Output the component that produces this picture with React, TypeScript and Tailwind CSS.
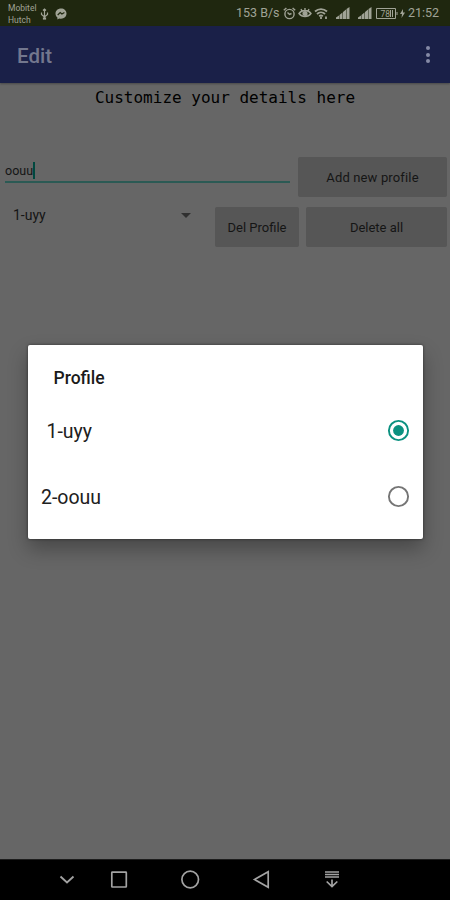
import { useState } from 'react'

const profiles = [
  { id: 1, label: '1-uyy', indent: 'pl-[18.5px]' },
  { id: 2, label: '2-oouu', indent: 'pl-[13px]' },
]

function StatusBar() {
  return (
    <div className="flex h-[26px] shrink-0 items-center bg-[#1f270f] text-[#a0a396]">
      <div className="w-[30px] ml-2 mt-px text-[8.5px] leading-[12px]">
        <div>Mobitel</div>
        <div>Hutch</div>
      </div>
      <svg className="ml-[2px] mt-[2px] h-3 w-[9px]" viewBox="0 0 9 12" fill="none" stroke="currentColor" strokeWidth="1.2">
        <path d="M4.5 1v10M1.500 4.500v2l3 2.500 3-2.500v-2M3 2.500 4.500 1 6 2.500" />
        <path d="M3.500 10h2v1h-2z" fill="currentColor" />
      </svg>
      <svg className="ml-[6px] mt-[2px] h-3 w-3" viewBox="0 0 12 12">
        <path d="M6 .5C2.800.5.5 2.700.5 5.600c0 1.600.7 3 1.900 4v2l1.800-1c.6.2 1.200.2 1.800.2 3.200 0 5.500-2.200 5.500-5.200S9.200.5 6 .5Z" fill="currentColor" />
        <path d="m2.700 7 2.500-2.500 1.700 1.500 2.500-1.500" fill="none" stroke="#1f270f" strokeWidth="1.200" />
      </svg>

      <div className="ml-auto mr-[10px] flex items-center">
        <span className="w-[44px] whitespace-nowrap text-[12.5px]">153 B/s</span>
        <svg className="ml-[3px] h-[13px] w-[13px]" viewBox="0 0 13 13" fill="none" stroke="currentColor" strokeWidth="1.400">
          <circle cx="6.500" cy="7" r="4.600" />
          <path d="M.8 3.300 3.400 1M12.200 3.300 9.600 1M4.500 5.500 6.500 7.500l2-1" />
        </svg>
        <svg className="ml-[2px] h-[13px] w-[14px]" viewBox="0 0 14 13" fill="none" stroke="currentColor" strokeWidth="1.400">
          <path d="M1 6.500c3-4 9-4 12 0-3 4-9 4-12 0ZM7 1v2.500M3 2l1 2M11 2l-1 2" />
          <circle cx="7" cy="6.500" r="1.900" fill="currentColor" />
        </svg>
        <svg className="ml-[2px] h-[13px] w-[15px]" viewBox="0 0 15 13" fill="none" stroke="currentColor" strokeWidth="1.800">
          <path d="M1 4.500c3.500-3.300 8.500-3.300 12 0M3 7c2.300-2.200 5.700-2.200 8 0M5.200 9.200c1.200-1 2.400-1 3.600 0" />
          <path d="M7 10v2M12 9.500v2.500" />
        </svg>
        <SignalIcon className="ml-[7px]" />
        <SignalIcon className="ml-[8px]" />
        <svg className="ml-[4px] h-[11px] w-[22px]" viewBox="0 0 22 11" fill="none" stroke="currentColor">
          <path d="M.5 .5h19v10H.5zM21 4v3M14.500 2v7M16.500 2v7" />
          <text x="4.500" y="8.700" fontSize="8.500" fill="currentColor" stroke="none">78</text>
        </svg>
        <svg className="ml-[2px] h-[9px] w-[5px]" viewBox="0 0 5 9" fill="currentColor">
          <path d="M3 0 0 5h2l-.5 4L5 3.500H3z" />
        </svg>
        <span className="ml-[3px] w-[32px] whitespace-nowrap text-[12.500px]">21:52</span>
      </div>
    </div>
  )
}

function SignalIcon({ className }: { className: string }) {
  return (
    <svg className={`h-3 w-[14px] ${className}`} viewBox="0 0 14 12" fill="currentColor">
      <path d="M0 12v-1.500L3 8.500V12zM3.500 12V8L6.500 5.500V12zM7 12V5L10 2.500V12zM10.500 12V2L13.500 0V12z" />
    </svg>
  )
}

function NavBar() {
  return (
    <div className="flex h-[41px] shrink-0 items-center border-t border-[#1c1c1c] bg-black pl-[57px] text-[#a3a3a3]">
      <svg className="h-5 w-5" viewBox="0 0 20 20" fill="none" stroke="currentColor" strokeWidth="1.800">
        <path d="m3.500 6.500 6.500 6 6.500-6" />
      </svg>
      <svg className="ml-8 h-5 w-5" viewBox="0 0 20 20" fill="none" stroke="currentColor" strokeWidth="1.700">
        <rect x="2.800" y="2.200" width="14.500" height="14.800" rx="0.500" />
      </svg>
      <svg className="ml-[51px] h-5 w-5" viewBox="0 0 20 20" fill="none" stroke="currentColor" strokeWidth="1.700">
        <circle cx="10.200" cy="9.500" r="8.300" />
      </svg>
      <svg className="ml-[51px] h-5 w-5" viewBox="0 0 20 20" fill="none" stroke="currentColor" strokeWidth="1.700">
        <path d="M17.200 1.700v15.500L3.500 9.500Z" />
      </svg>
      <svg className="ml-[51px] h-5 w-5" viewBox="0 0 20 20" fill="none" stroke="currentColor" strokeWidth="1.700">
        <path d="M3 2h14M3 4.500h14M3 7h14M10 9.500v7.500M4.700 11.500l5.300 5 5.300-5" />
      </svg>
    </div>
  )
}

export default function App() {
  const [selected, setSelected] = useState(1)

  return (
    <div className="relative flex h-[900px] w-[450px] flex-col overflow-hidden bg-[#666666] font-[Roboto,sans-serif]">
      <StatusBar />

      {/* Toolbar */}
      <header className="flex h-[57px] shrink-0 items-center justify-between bg-[#1a2048] pl-[17px] pr-[20.500px] shadow-[0_1px_2px_rgba(0,0,0,0.3)]">
        <h1 className="pt-[3px] text-[20.500px] font-medium text-[#73778e]">Edit</h1>
        <div className="flex flex-col gap-[2.500px]">
          <span className="h-1 w-1 rounded-full bg-[#858aa6]" />
          <span className="h-1 w-1 rounded-full bg-[#858aa6]" />
          <span className="h-1 w-1 rounded-full bg-[#858aa6]" />
        </div>
      </header>

      <main className="flex flex-1 flex-col">
        <p className="mt-[5px] text-center font-['DejaVu_Sans_Mono',monospace] text-[16px] leading-[20px] text-black">
          Customize your details here
        </p>

        <div className="mt-[49px] flex h-[40px] pl-[5px] pr-[3px] text-[13px] text-[#151515]">
          <div className="flex h-[26px] w-[285px] items-center border-b-2 border-[#2b5a54]">
            <span className="pt-[5px] text-[12.500px]">oouu</span>
            <span className="mt-[2px] h-[17px] w-[2px] bg-[#00483f]" />
          </div>
          <button type="button" className="ml-[8px] h-[40px] flex-1 rounded-[2px] bg-[#565656] pt-px tracking-[0.15px]">
            Add new profile
          </button>
        </div>

        <div className="mt-[10px] flex h-[40px] pl-[13px] pr-[3px] text-[13px] text-[#151515]">
          <div className="flex h-[16px] w-[178px] items-center justify-between">
            <span className="text-[14px]">1-uyy</span>
            <svg className="h-[5px] w-[10px]" viewBox="0 0 10 5" fill="#303030">
              <path d="M0 0h10L5 5z" />
            </svg>
          </div>
          <button type="button" className="ml-[24px] h-[40px] w-[84px] rounded-[2px] bg-[#565656] pt-px">
            Del Profile
          </button>
          <button type="button" className="ml-[7px] h-[40px] flex-1 rounded-[2px] bg-[#565656] pt-px">
            Delete all
          </button>
        </div>
      </main>

      <NavBar />

      {/* Profile dialog */}
      <div className="absolute left-[28px] top-[345px] flex h-[194px] w-[395px] flex-col rounded-[2px] bg-white text-[#202020] shadow-[0_10px_20px_rgba(0,0,0,0.3),0_0_3px_rgba(0,0,0,0.5)]">
        <h2 className="mt-[21px] h-[23px] pl-[25.500px] text-[17.500px] font-medium leading-[24px] text-[#1a1a1a]">Profile</h2>
        <div className="mt-[8px] flex flex-col">
          {profiles.map((p) => (
            <button
              key={p.id}
              type="button"
              onClick={() => setSelected(p.id)}
              className={`flex h-[66.500px] items-center justify-between pr-[13.500px] ${p.indent}`}
            >
              <span className="pt-[2px] text-[19.500px]">{p.label}</span>
              <svg className="h-[23px] w-[23px]" viewBox="0 0 23 23" fill="none">
                <circle cx="11.500" cy="11.500" r="9.600" stroke={selected === p.id ? '#0b9180' : '#757575'} strokeWidth="1.900" />
                {selected === p.id && <circle cx="11.500" cy="11.500" r="5.400" fill="#0b9180" />}
              </svg>
            </button>
          ))}
        </div>
      </div>
    </div>
  )
}
